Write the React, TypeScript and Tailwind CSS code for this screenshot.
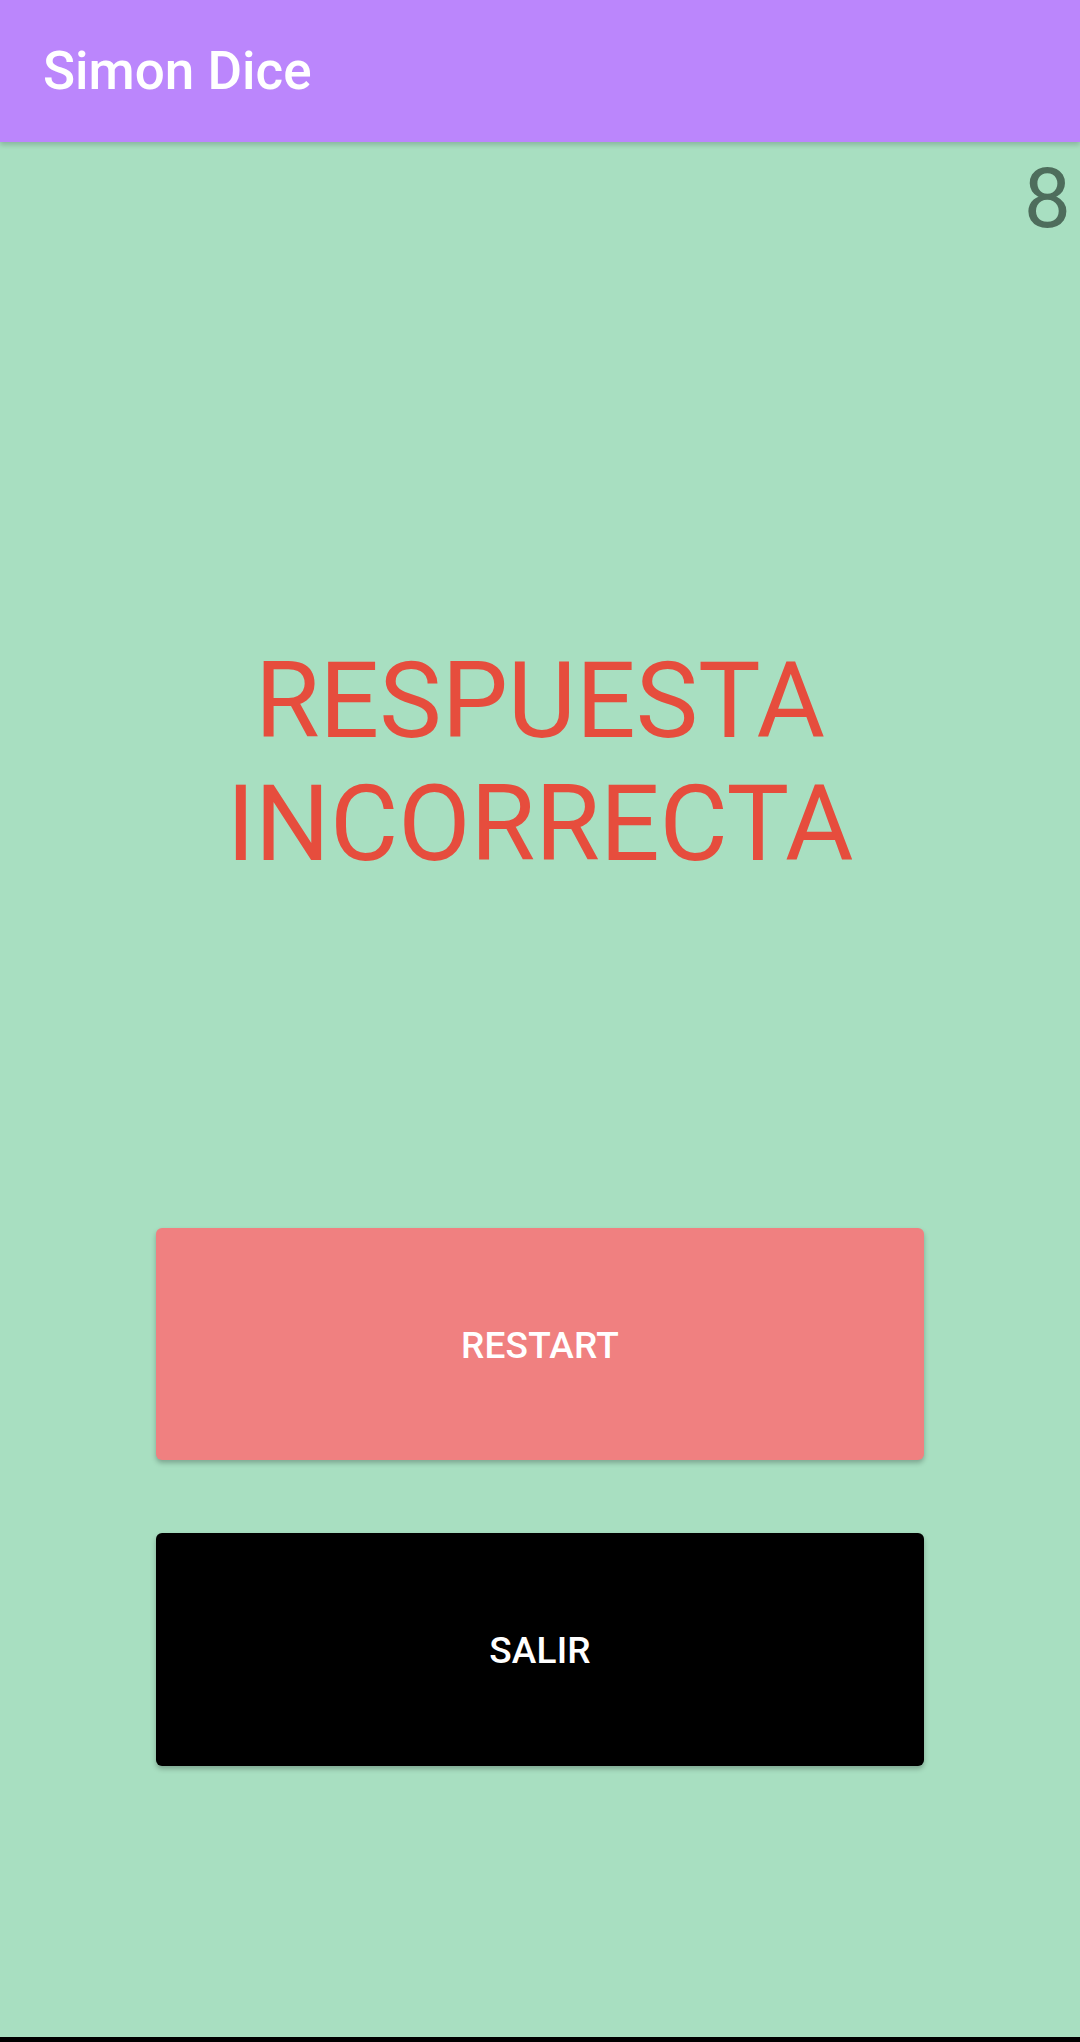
import React from "react";

export default function App() {
  return (
    <div
      className="relative flex h-[2042px] w-[1080px] flex-col overflow-hidden bg-[#a8dfc1]"
      style={{ fontFamily: "Roboto, 'Noto Sans', sans-serif" }}
    >
      <header className="relative z-10 flex h-[142px] shrink-0 items-center bg-[#bb86fc] pl-[43px] shadow-[0_3px_5px_rgba(0,0,0,0.18)]">
        <h1 className="text-[53px] font-medium leading-none text-white">Simon Dice</h1>
      </header>

      <main className="flex flex-1 flex-col">
        <div className="mt-[8px] flex justify-end pr-[9px]">
          <span className="text-[84px] leading-[98px] text-[#4e6d5c]">8</span>
        </div>

        <div className="mt-[392px] flex flex-col items-center text-center text-[105px] leading-[123px] text-[#e64d3d]">
          <span>RESPUESTA</span>
          <span>INCORRECTA</span>
        </div>

        <div className="mt-[342px] flex flex-col items-center gap-[73px]">
          <button className="flex h-[232px] w-[768px] items-center justify-center rounded-[6px] bg-[#f08080] pt-[3px] text-[37px] font-medium tracking-[0.005em] text-white shadow-[0_3px_5px_rgba(0,0,0,0.25)]">
            RESTART
          </button>
          <button className="flex h-[233px] w-[768px] items-center justify-center rounded-[6px] bg-black pt-[3px] text-[37px] font-medium tracking-[0.005em] text-white shadow-[0_3px_5px_rgba(0,0,0,0.25)]">
            SALIR
          </button>
        </div>
      </main>

      <div className="h-[5px] w-full shrink-0 bg-black" />
    </div>
  );
}
